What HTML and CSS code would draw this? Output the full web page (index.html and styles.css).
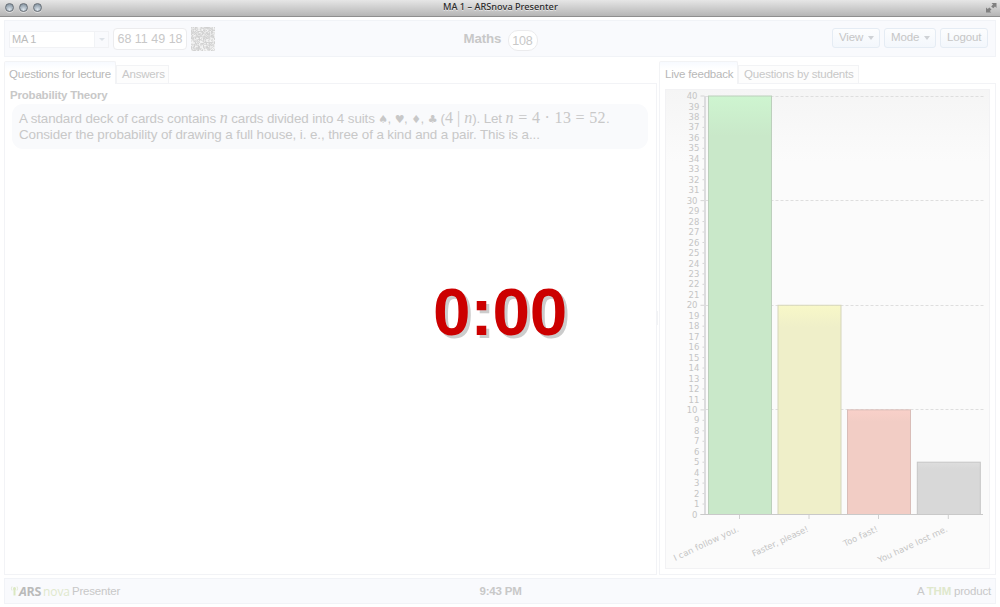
FILE: index.html
```html
<!DOCTYPE html>
<html lang="en">
<head>
<meta charset="utf-8">
<title>MA 1 – ARSnova Presenter</title>
<link rel="stylesheet" href="styles.css">
</head>
<body>
<div class="window">
  <div class="titlebar">
    <div class="lights"><i class="light"></i><i class="light"></i><i class="light"></i></div>
    <span class="title">MA 1 – ARSnova Presenter</span>
    <svg class="expand" width="11" height="10" viewBox="0 0 11 10"><path d="M5.5 0H10.5V5L9 3.6 7.3 5.3 5.2 3.4 7 1.6zM0 4.6L1.7 6.1 3.4 4.5 5.5 6.5 3.8 8.1 5.3 9.6H0z" fill="#808080"/></svg>
  </div>
  <header class="bar header">
    <div class="left">
      <div class="select"><span class="value">MA 1</span><span class="drop"><i class="arrow"></i></span></div>
      <div class="keyword">68 11 49 18</div>
      <svg class="qr" id="qr" width="24" height="24" viewBox="0 0 30 30"></svg>
    </div>
    <div class="course"><span class="name">Maths</span><span class="count">108</span></div>
    <div class="actions">
      <button class="btn view">View<i class="arrow dark"></i></button>
      <button class="btn mode">Mode<i class="arrow dark"></i></button>
      <button class="btn logout">Logout</button>
    </div>
  </header>
  <main class="main">
    <section class="pane">
      <div class="tabs"><div class="tab active lecture">Questions for lecture</div><div class="tab answers">Answers</div></div>
      <div class="content questions">
        <h2 class="subject">Probability Theory</h2>
        <div class="question">
          <div class="line first">A standard deck of cards contains <em class="m">n</em> cards divided into 4 suits <span class="suit">♠</span>, <span class="suit">♥</span>, <span class="suit">♦</span>, <span class="suit">♣</span> (<span class="m">4 | <em>n</em></span>). Let <span class="m wide"><em>n</em> = 4 · 13 = 52</span>.</div>
          <div class="line second">Consider the probability of drawing a full house, i. e., three of a kind and a pair. This is a...</div>
        </div>
      </div>
    </section>
    <div class="splitter"><i class="thumb"></i></div>
    <section class="pane">
      <div class="tabs"><div class="tab active live">Live feedback</div><div class="tab students">Questions by students</div></div>
      <div class="content feedback">
        <svg class="chart" id="chart" width="325" height="480" viewBox="665.5 89 325 480">
          <defs>
            <linearGradient id="plot" x2="0" y2="1"><stop offset="0" stop-color="#f5f5f5"/><stop offset=".15" stop-color="#fbfbfb"/><stop offset="1" stop-color="#fbfbfb"/></linearGradient>
            <linearGradient id="green" gradientUnits="userSpaceOnUse" x1="0" x2="0" y1="96" y2="136"><stop offset="0" stop-color="#cef5d0"/><stop offset="1" stop-color="#c9e8c9"/></linearGradient>
            <linearGradient id="yellow" gradientUnits="userSpaceOnUse" x1="0" x2="0" y1="305" y2="327"><stop offset="0" stop-color="#f8f8c8"/><stop offset="1" stop-color="#efefc9"/></linearGradient>
            <linearGradient id="red" gradientUnits="userSpaceOnUse" x1="0" x2="0" y1="410" y2="422"><stop offset="0" stop-color="#f9d0c9"/><stop offset="1" stop-color="#f2cdc5"/></linearGradient>
            <linearGradient id="gray" gradientUnits="userSpaceOnUse" x1="0" x2="0" y1="462" y2="469"><stop offset="0" stop-color="#dedede"/><stop offset="1" stop-color="#d8d8d8"/></linearGradient>
          </defs>
          <rect x="666" y="89.5" width="324" height="479" fill="url(#plot)" stroke="#f2f2f4"/>
        </svg>
      </div>
    </section>
  </main>
  <footer class="bar footer">
    <div class="brand">
      <svg width="9" height="10" viewBox="0 0 9 10"><path d="M4.5 3V9.5" stroke="#dbe8c1" stroke-width="2"/><circle cx="4.5" cy="2.5" r="1.5" fill="#dbe8c1"/><path d="M2 .5Q.8 2.3 2 4.5M7 .5Q8.2 2.3 7 4.5" stroke="#e2e8d6" fill="none"/></svg>
      <span class="ars"><i>A</i>RS</span><span class="nova">nova</span><span class="presenter">Presenter</span>
    </div>
    <div class="clock">9:43 PM</div>
    <div class="product">A <b>THM</b> product</div>
  </footer>
  <div class="countdown">0:00</div>
</div>
<script src="script.js"></script>
</body>
</html>
```
FILE: styles.css
```css
* { box-sizing: border-box; }
body { margin: 0; background: #fff; font-family: "Liberation Sans", Arial, sans-serif; font-size: 11.5px; letter-spacing: -.2px; color: #c8c8c8; }
.window { position: relative; width: 1000px; height: 607px; overflow: hidden; display: flex; flex-direction: column; }
.titlebar { height: 17px; flex: none; display: grid; grid-template-columns: 1fr auto 1fr; align-items: center; padding: 0 3px 0 5px; background: linear-gradient(#e6e6e6, #b5b5b5); border-bottom: 1px solid #8e8e8e; }
.lights { display: flex; gap: 5px; margin-top: -1px; }
.light { width: 9px; height: 9px; border-radius: 50%; border: 1px solid #697078; background: radial-gradient(circle at 50% 80%, #dce5ec, #8998a5 80%); box-shadow: 0 1px #ddd; }
.title { font: 500 9.2px/14px "Noto Sans", sans-serif; letter-spacing: 0; color: #2b2b2b; white-space: nowrap; text-shadow: 0 1px #e8e8e8; width: 116px; margin-top: -2px; }
.expand { justify-self: end; }
.bar { flex: none; margin: 0 4px; border: 1px solid #f1f3f7; background: #f9fafd; display: grid; grid-template-columns: 1fr auto 1fr; }
.header { height: 37px; margin-top: 3px; padding: 0 7px 0 4px; }
.left { display: flex; align-items: flex-start; }
.select { display: flex; width: 100px; height: 17px; margin-top: 10px; border: 1px solid #f1f2f5; background: #fff; }
.value { flex: 1; padding-left: 2px; font-size: 11px; line-height: 14px; color: #bbb; }
.drop { width: 14px; border-left: 1px solid #f1f3f6; background: #f9fafd; display: flex; align-items: center; justify-content: center; }
.arrow { display: block; border: 3px solid transparent; border-top-color: #dde2e8; border-bottom: 0; }
.keyword { width: 74px; height: 22px; margin: 7px 4px 0 4px; border: 1px solid #ececee; border-radius: 4px; background: #fff; font-size: 12.5px; letter-spacing: 0; line-height: 21px; text-align: center; white-space: nowrap; }
.qr { margin-top: 6px; }
.course { display: flex; align-items: flex-start; margin-left: 4px; }
.name { font-size: 13.3px; letter-spacing: -.1px; font-weight: bold; line-height: 36px; width: 44px; }
.count { width: 30px; height: 21px; margin-top: 9px; border: 1px solid #ebebed; border-radius: 10px; background: #fff; text-align: center; font-size: 12.5px; line-height: 21px; }
.actions { display: flex; justify-content: flex-end; gap: 4px; padding-top: 7px; }
.btn { height: 20px; border: 1px solid #e5ecf4; border-radius: 3px; background: linear-gradient(#fcfdfe, #f3f7fc); padding: 0 0 1px 6px; display: flex; align-items: center; gap: 5px; font: 11.5px/17px "Liberation Sans", Arial, sans-serif; letter-spacing: -.15px; color: #c6c6c6; text-align: left; }
.arrow.dark { border-width: 4px 3.5px 0; border-top-color: #cfd2d6; }
.view { width: 48px; }
.mode { width: 52px; }
.logout { width: 48px; }
.main { flex: 1; display: grid; grid-template-columns: 653px 2px 337px; margin: 4px 4px 3px; min-height: 0; }
.pane { display: flex; flex-direction: column; min-width: 0; }
.splitter { display: flex; align-items: center; }
.thumb { width: 1px; height: 14px; background: #f2f3f5; }
.tabs { height: 22px; display: flex; align-items: flex-end; }
.tab { height: 18px; border: 1px solid #f2f3f5; border-bottom: 0; background: #fdfdfd; line-height: 17px; padding-left: 5px; white-space: nowrap; }
.tab.active { height: 23px; margin-bottom: -1px; padding-left: 4px; line-height: 25px; background: linear-gradient(#f7faff, #fff 7px); color: #b8b8b8; border-radius: 2px 2px 0 0; position: relative; }
.lecture { width: 112px; }
.answers { width: 53px; }
.tab.live { width: 79px; padding-left: 5px; }
.students { width: 121px; }
.content { flex: 1; border: 1px solid #f2f3f6; }
.questions { padding: 3px 8px 0 5px; }
.subject { margin: 0; font-size: 11.5px; line-height: 16px; }
.question { height: 45px; margin: 1px 0 0 2px; padding: 7px 7px; border-radius: 11px; background: #f9fafc; font-size: 13.4px; }
.line { white-space: nowrap; height: 16px; line-height: 16px; }
.first { letter-spacing: -.12px; }
.second { letter-spacing: -.1px; }
.m { font-family: "Liberation Serif", serif; font-size: 16px; line-height: 14px; letter-spacing: 0; }
.wide { letter-spacing: .33px; }
.suit { font-family: "DejaVu Sans", sans-serif; font-size: 11px; line-height: 14px; letter-spacing: -.6px; }
.feedback { padding: 5px 5px 0; }
.chart { display: block; letter-spacing: 0; }
.chart text { font-family: "DejaVu Sans", sans-serif; font-size: 8.5px; fill: #c5c5c5; }
.footer { height: 26px; margin-bottom: 3px; padding: 0 4px 0 5px; line-height: 24px; }
.brand { display: flex; align-items: center; height: 24px; }
.ars { font: bold 12.5px "Open Sans", sans-serif; color: #bababa; letter-spacing: -.3px; width: 24px; }
.nova { font: 12px "Open Sans", sans-serif; color: #dfe8cc; letter-spacing: -.1px; width: 29px; }
.presenter { white-space: nowrap; }
.clock { font-weight: bold; }
.product { text-align: right; }
.product b { color: #dfe8cc; }
.countdown { position: absolute; left: 0; right: 0; top: 273px; text-align: center; font-size: 67.5px; letter-spacing: -.3px; line-height: 78px; font-weight: bold; color: #c00; text-shadow: 3px 3px #ccc; }
```
FILE: script.js
```js
const NS = 'http://www.w3.org/2000/svg';
function draw(parent, tag, attrs, text) {
  const el = document.createElementNS(NS, tag);
  for (const key in attrs) el.setAttribute(key, attrs[key]);
  if (text !== undefined) el.textContent = text;
  parent.appendChild(el);
}

const chart = document.getElementById('chart');
const yOf = v => 514.5 - v * 10.4625;

for (const v of [10, 20, 30, 40]) {
  const y = Math.floor(yOf(v)) + 0.5;
  draw(chart, 'path', { d: `M706 ${y}H984`, stroke: '#dedede', 'stroke-dasharray': '3 2' });
}
for (let v = 0; v <= 40; v++) {
  const y = yOf(v), major = v % 10 === 0;
  draw(chart, 'path', { d: `M${major ? 701 : 703} ${y}H705`, stroke: '#d4d4d4' });
  draw(chart, 'text', { x: major ? 698 : 699.8, y: y + 3.1, 'text-anchor': 'end' }, v);
}
draw(chart, 'path', { d: 'M705.5 96V515', stroke: '#dcdcde', 'stroke-width': 2 });

const bars = [
  { label: 'I can follow you.', value: 40, x: 709, fill: 'url(#green)', stroke: '#bccfbc', length: 71 },
  { label: 'Faster, please!', value: 20, x: 778.5, fill: 'url(#yellow)', stroke: '#d5d5bb', length: 61 },
  { label: 'Too fast!', value: 10, x: 848, fill: 'url(#red)', stroke: '#d9bdb8', length: 37 },
  { label: 'You have lost me.', value: 5, x: 917.8, fill: 'url(#gray)', stroke: '#c6c6c6', length: 76 }
];
for (const b of bars) {
  const y = yOf(b.value), mid = b.x + 31.5;
  draw(chart, 'rect', { x: b.x, y, width: 63, height: 514.5 - y, fill: b.fill, stroke: b.stroke });
  draw(chart, 'path', { d: `M${mid - 0.5} 515V519`, stroke: '#d0d0d0' });
  draw(chart, 'text', { transform: `translate(${mid - 0.5} 531) rotate(-25)`, 'text-anchor': 'end', textLength: b.length }, b.label);
}
draw(chart, 'path', { d: 'M701 514.5H983.5', stroke: '#c9c9c9' });

const qr = document.getElementById('qr');
draw(qr, 'rect', { width: 30, height: 30, fill: '#f4f4f4' });
let seed = 7;
for (let y = 0; y < 30; y++) for (let x = 0; x < 30; x++) {
  seed = (seed * 16807) % 2147483647;
  if ((seed >> 8) % 2) draw(qr, 'rect', { x, y, width: 1, height: 1, fill: '#c6c6c6' });
}
```
